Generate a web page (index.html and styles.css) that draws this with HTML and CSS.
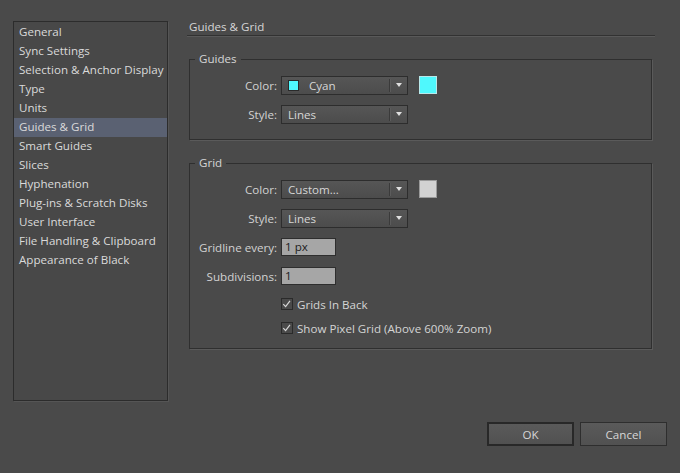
FILE: index.html
```html
<!DOCTYPE html>
<html>
<head>
<meta charset="utf-8">
<link rel="stylesheet" href="styles.css">
</head>
<body>
<div class="dialog">
  <div class="top">
    <ul class="sidebar">
      <li>General</li>
      <li>Sync Settings</li>
      <li>Selection &amp; Anchor Display</li>
      <li>Type</li>
      <li>Units</li>
      <li class="active">Guides &amp; Grid</li>
      <li>Smart Guides</li>
      <li>Slices</li>
      <li>Hyphenation</li>
      <li>Plug-ins &amp; Scratch Disks</li>
      <li>User Interface</li>
      <li>File Handling &amp; Clipboard</li>
      <li>Appearance of Black</li>
    </ul>
    <div class="main">
      <div class="title">Guides &amp; Grid</div>

      <fieldset class="group group-guides">
        <legend>Guides</legend>
        <div class="rows">
          <div class="row">
            <span class="label">Color:</span>
            <div class="select">
              <span class="mini-swatch cyan"></span>
              <span class="select-text">Cyan</span>
              <span class="select-arrow"></span>
            </div>
            <span class="swatch cyan"></span>
          </div>
          <div class="row">
            <span class="label">Style:</span>
            <div class="select">
              <span class="select-text">Lines</span>
              <span class="select-arrow"></span>
            </div>
          </div>
        </div>
      </fieldset>

      <fieldset class="group group-grid">
        <legend>Grid</legend>
        <div class="rows">
          <div class="row">
            <span class="label">Color:</span>
            <div class="select">
              <span class="select-text">Custom...</span>
              <span class="select-arrow"></span>
            </div>
            <span class="swatch grey"></span>
          </div>
          <div class="row">
            <span class="label">Style:</span>
            <div class="select">
              <span class="select-text">Lines</span>
              <span class="select-arrow"></span>
            </div>
          </div>
          <div class="row">
            <span class="label">Gridline every:</span>
            <div class="input">1 px</div>
          </div>
          <div class="row">
            <span class="label">Subdivisions:</span>
            <div class="input">1</div>
          </div>
          <div class="row check-row first-check">
            <span class="label"></span>
            <span class="checkbox"><svg viewBox="0 0 12 12" width="12" height="12"><path d="M2.5 6.2 L5 8.8 L9.8 2.6" fill="none" stroke="#d8d8d8" stroke-width="1.3"/></svg></span>
            <span class="check-label">Grids In Back</span>
          </div>
          <div class="row check-row">
            <span class="label"></span>
            <span class="checkbox"><svg viewBox="0 0 12 12" width="12" height="12"><path d="M2.5 6.2 L5 8.8 L9.8 2.6" fill="none" stroke="#d8d8d8" stroke-width="1.3"/></svg></span>
            <span class="check-label">Show Pixel Grid (Above 600% Zoom)</span>
          </div>
        </div>
      </fieldset>
    </div>
  </div>
  <div class="buttons">
    <button class="btn btn-default">OK</button>
    <button class="btn">Cancel</button>
  </div>
</div>
</body>
</html>
```
FILE: styles.css
```css
html, body {
  margin: 0;
  padding: 0;
  background: #4a4a4a;
}
body {
  width: 680px;
  height: 473px;
  overflow: hidden;
  font-family: "Open Sans", "Noto Sans", sans-serif;
  font-size: 11.6px;
  color: #d4d4d4;
}
.dialog {
  padding: 19px 13px 0 13px;
  display: flex;
  flex-direction: column;
}
.top {
  display: flex;
  gap: 19px;
}
.sidebar {
  list-style: none;
  margin: 2px 0 0 0;
  padding: 1px 0 0 0;
  width: 153px;
  height: 377px;
  border: 1px solid #2c2c2c;
  box-shadow: 1px 1px 0 #555;
  background: #484848;
}
.sidebar li {
  height: 17px;
  line-height: 17px;
  padding: 0 0 2px 5px;
  color: #dadada;
  white-space: nowrap;
}
.sidebar li.active {
  background: #5a6172;
}
.main {
  width: 468px;
}
.title {
  height: 16px;
  line-height: 16px;
  padding-left: 2px;
  border-bottom: 1px solid #323232;
  box-shadow: 0 1px 0 #595959;
  color: #d6d6d6;
}
.group {
  margin: 15px 3px 0 2px;
  padding: 0;
  border: 1px solid #2f2f2f;
  box-shadow: 1px 1px 0 #5a5a5a;
  min-width: 0;
}
.group legend {
  margin-left: 5px;
  padding: 0 4px;
  line-height: 16px;
  color: #d6d6d6;
}
.rows {
  padding: 9px 0 16px 9px;
  display: flex;
  flex-direction: column;
  gap: 11px;
}
.group-grid .rows {
  padding-bottom: 14px;
}
.row {
  display: flex;
  align-items: center;
  height: 18px;
  gap: 4px;
}
.label {
  width: 78px;
  text-align: right;
  white-space: nowrap;
  color: #d2d2d2;
}
.select {
  width: 119px;
  height: 17px;
  border: 1px solid #2d2d2d;
  background: linear-gradient(#565656, #4c4c4c);
  display: flex;
  align-items: center;
  padding-left: 6px;
  box-sizing: content-box;
}
.mini-swatch {
  width: 9px;
  height: 9px;
  border: 1px solid #2a2a2a;
  margin-right: 10px;
}
.cyan {
  background: #4ff8fd;
}
.grey {
  background: #d2d2d2;
}
.swatch.cyan {
  border-color: #b8e8ea;
}
.select-text {
  flex: 1;
  color: #d6d6d6;
  line-height: 17px;
}
.select-arrow {
  width: 17px;
  height: 13px;
  border-left: 1px solid #3a3a3a;
  box-shadow: inset 1px 0 0 #5c5c5c;
  display: flex;
  align-items: center;
  justify-content: center;
}
.select-arrow::after {
  content: "";
  width: 0;
  height: 0;
  border-left: 3.5px solid transparent;
  border-right: 3.5px solid transparent;
  border-top: 4px solid #e0e0e0;
}
.swatch {
  width: 16px;
  height: 16px;
  margin-left: 7px;
  border: 1px solid #9a9a9a;
}
.input {
  width: 50px;
  height: 16px;
  line-height: 16px;
  border: 1px solid #2e2e2e;
  background: #a6a6a6;
  color: #1c1c1c;
  padding-left: 3px;
}
.check-row {
  height: 12px;
}
.first-check {
  margin-top: 2px;
  margin-bottom: 1px;
}
.checkbox {
  width: 10px;
  height: 10px;
  border: 1px solid #2a2a2a;
  background: #4a4a4a;
  display: flex;
}
.checkbox svg {
  margin: -1px 0 0 -1px;
}
.check-label {
  color: #d4d4d4;
  white-space: nowrap;
}
.buttons {
  display: flex;
  justify-content: flex-end;
  gap: 6px;
  margin-top: 21px;
}
.btn {
  width: 87px;
  height: 24px;
  font-family: inherit;
  font-size: 11.6px;
  color: #d6d6d6;
  background: linear-gradient(#5a5a5a, #515151);
  border: 1px solid #2e2e2e;
  padding: 0;
}
.btn-default {
  border: 2px solid #282828;
}
```
